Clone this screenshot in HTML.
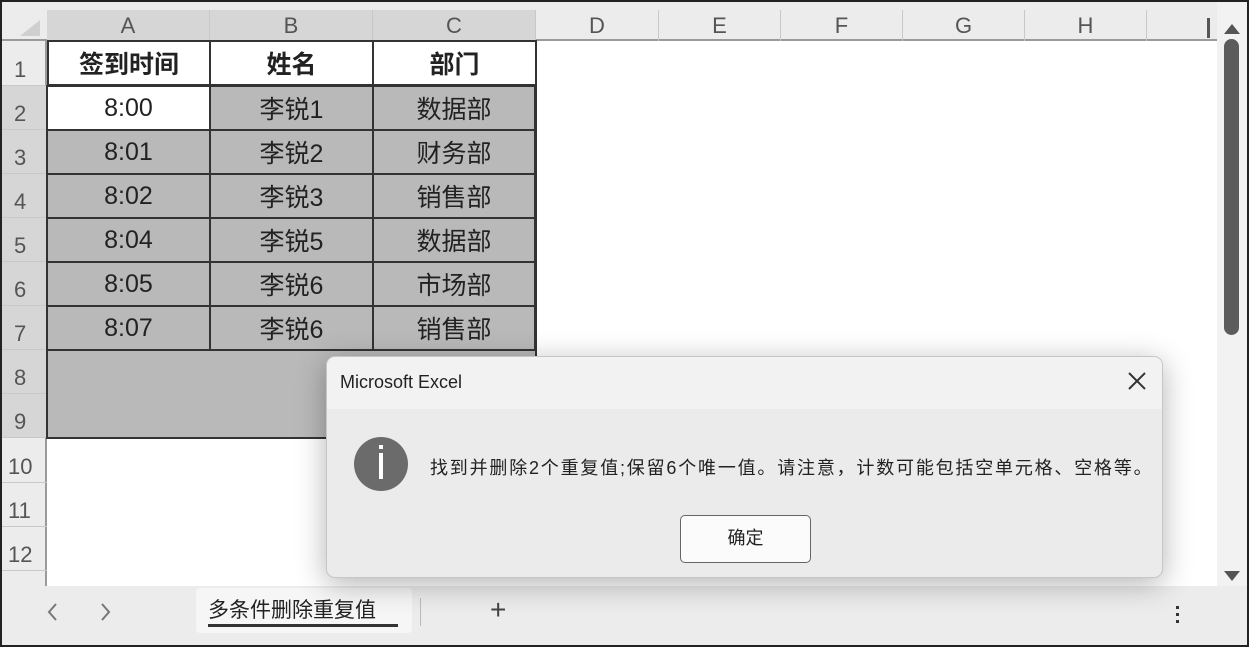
<!DOCTYPE html><html><head><meta charset="utf-8"><style>
*{margin:0;padding:0;box-sizing:border-box}
body{width:1249px;height:647px;overflow:hidden;background:#fff;font-family:"Liberation Sans","Noto Sans CJK SC",sans-serif;position:relative}
.a{position:absolute}
.ch{position:absolute;top:10px;height:31px;font-size:22px;color:#555;text-align:center;line-height:31px;border-right:1px solid #c8c8c8}
.rh{position:absolute;left:2px;width:45px;font-size:22px;color:#555;padding-left:12px;border-bottom:1px solid #c8c8c8;display:flex;align-items:flex-end;padding-bottom:2px}
.c{position:absolute;font-size:25px;color:#222;text-align:center;display:flex;align-items:center;justify-content:center;border:1px solid #333}
.g{background:#b9b9b9}
</style></head><body>
<div class="a" style="left:0;top:0;width:1249px;height:647px;border:2px solid #222;z-index:50;pointer-events:none"></div>
<div class="a" style="left:2px;top:2px;width:1215px;height:39px;background:#ececec;border-bottom:2px solid #9a9a9a"></div>
<div class="a" style="left:2px;top:41px;width:45px;height:545px;background:#ececec;border-right:2px solid #9a9a9a"></div>
<div class="a" style="left:20px;top:20px;width:0;height:0;border-left:20px solid transparent;border-bottom:16px solid #cfcfcf"></div>
<div class="ch" style="left:47px;width:163px;background:#d6d6d6">A</div>
<div class="ch" style="left:210px;width:163px;background:#d6d6d6">B</div>
<div class="ch" style="left:373px;width:163px;background:#d6d6d6">C</div>
<div class="ch" style="left:536px;width:123px">D</div>
<div class="ch" style="left:659px;width:122px">E</div>
<div class="ch" style="left:781px;width:122px">F</div>
<div class="ch" style="left:903px;width:122px">G</div>
<div class="ch" style="left:1025px;width:122px">H</div>
<div class="a" style="left:1207px;top:18px;width:3px;height:20px;background:#555"></div>
<div class="a" style="left:1217px;top:2px;width:30px;height:584px;background:#f2f2f2"></div>
<div class="a" style="left:1224px;top:24px;width:0;height:0;border-left:8px solid transparent;border-right:8px solid transparent;border-bottom:10px solid #555"></div>
<div class="a" style="left:1224px;top:39px;width:15px;height:296px;background:#5c5c5c;border-radius:8px"></div>
<div class="a" style="left:1224px;top:571px;width:0;height:0;border-left:8px solid transparent;border-right:8px solid transparent;border-top:10px solid #555"></div>
<div class="rh" style="top:41px;height:45px">1</div>
<div class="rh" style="top:86px;height:44px;background:#d6d6d6">2</div>
<div class="rh" style="top:130px;height:44px;background:#d6d6d6">3</div>
<div class="rh" style="top:174px;height:44px;background:#d6d6d6">4</div>
<div class="rh" style="top:218px;height:44px;background:#d6d6d6">5</div>
<div class="rh" style="top:262px;height:44px;background:#d6d6d6">6</div>
<div class="rh" style="top:306px;height:44px;background:#d6d6d6">7</div>
<div class="rh" style="top:350px;height:44px;background:#d6d6d6">8</div>
<div class="rh" style="top:394px;height:44px;background:#d6d6d6">9</div>
<div class="rh" style="top:438px;height:45px;padding-left:6px">10</div>
<div class="rh" style="top:483px;height:44px;padding-left:6px">11</div>
<div class="rh" style="top:527px;height:44px;padding-left:6px">12</div>
<div class="c" style="left:47px;top:40px;width:164px;height:46px;font-weight:bold;border-width:2px">签到时间</div>
<div class="c" style="left:209px;top:40px;width:165px;height:46px;font-weight:bold;border-width:2px">姓名</div>
<div class="c" style="left:372px;top:40px;width:165px;height:46px;font-weight:bold;border-width:2px">部门</div>
<div class="a" style="left:46px;top:85px;width:491px;height:354px;border:2px solid #333;background:#b9b9b9"></div>
<div class="c" style="left:47px;top:86px;width:163px;height:44px;background:#fff">8:00</div>
<div class="c g" style="left:210px;top:86px;width:163px;height:44px">李锐1</div>
<div class="c g" style="left:373px;top:86px;width:162px;height:44px">数据部</div>
<div class="c g" style="left:47px;top:130px;width:163px;height:44px">8:01</div>
<div class="c g" style="left:210px;top:130px;width:163px;height:44px">李锐2</div>
<div class="c g" style="left:373px;top:130px;width:162px;height:44px">财务部</div>
<div class="c g" style="left:47px;top:174px;width:163px;height:44px">8:02</div>
<div class="c g" style="left:210px;top:174px;width:163px;height:44px">李锐3</div>
<div class="c g" style="left:373px;top:174px;width:162px;height:44px">销售部</div>
<div class="c g" style="left:47px;top:218px;width:163px;height:44px">8:04</div>
<div class="c g" style="left:210px;top:218px;width:163px;height:44px">李锐5</div>
<div class="c g" style="left:373px;top:218px;width:162px;height:44px">数据部</div>
<div class="c g" style="left:47px;top:262px;width:163px;height:44px">8:05</div>
<div class="c g" style="left:210px;top:262px;width:163px;height:44px">李锐6</div>
<div class="c g" style="left:373px;top:262px;width:162px;height:44px">市场部</div>
<div class="c g" style="left:47px;top:306px;width:163px;height:45px;border-bottom-width:2px">8:07</div>
<div class="c g" style="left:210px;top:306px;width:163px;height:45px;border-bottom-width:2px">李锐6</div>
<div class="c g" style="left:373px;top:306px;width:162px;height:45px;border-bottom-width:2px">销售部</div>
<div class="a" style="left:2px;top:586px;width:1245px;height:59px;background:#ececec"></div>
<svg class="a" style="left:44px;top:600px" width="16" height="24"><path d="M12 4 L5 12 L12 20" stroke="#777" stroke-width="2" fill="none"/></svg>
<svg class="a" style="left:98px;top:600px" width="16" height="24"><path d="M4 4 L11 12 L4 20" stroke="#777" stroke-width="2" fill="none"/></svg>
<div class="a" style="left:196px;top:588px;width:216px;height:45px;background:#f6f6f6;border-radius:4px"></div>
<div class="a" style="left:208px;top:594px;font-size:21px;color:#222">多条件删除重复值</div>
<div class="a" style="left:208px;top:624px;width:190px;height:3px;background:#333"></div>
<div class="a" style="left:420px;top:598px;width:1px;height:28px;background:#bbb"></div>
<div class="a" style="left:490px;top:594px;font-size:28px;color:#444">+</div>
<div class="a" style="left:1176px;top:606px;width:3px;height:3px;background:#333;box-shadow:0 7px 0 #333,0 14px 0 #333"></div>
<div class="a" style="left:326px;top:356px;width:837px;height:222px;background:#ebebeb;border-radius:9px;border:1px solid #c6c6c6;box-shadow:0 6px 30px rgba(0,0,0,.3);overflow:hidden">
<div style="height:52px;background:#f2f2f2;font-size:18px;color:#222;padding:15px 0 0 13px">Microsoft Excel</div>
<svg class="a" style="left:800px;top:14px" width="20" height="20"><path d="M2 2 L18 18 M18 2 L2 18" stroke="#333" stroke-width="2"/></svg>
<div class="a" style="left:27px;top:80px;width:54px;height:54px;border-radius:50%;background:#6b6b6b"></div>
<div class="a" style="left:52px;top:96px;width:4px;height:26px;background:#fff"></div>
<div class="a" style="left:52px;top:88px;width:4px;height:4px;background:#fff"></div>
<div class="a" style="left:103px;top:97px;font-size:18px;letter-spacing:1.8px;color:#222;white-space:nowrap">找到并删除2个重复值;保留6个唯一值。请注意，计数可能包括空单元格、空格等。</div>
<div class="a" style="left:353px;top:158px;width:131px;height:48px;background:#fbfbfb;border:1.5px solid #666;border-radius:5px;font-size:18px;text-align:center;line-height:45px;color:#222">确定</div>
</div>
</body></html>
